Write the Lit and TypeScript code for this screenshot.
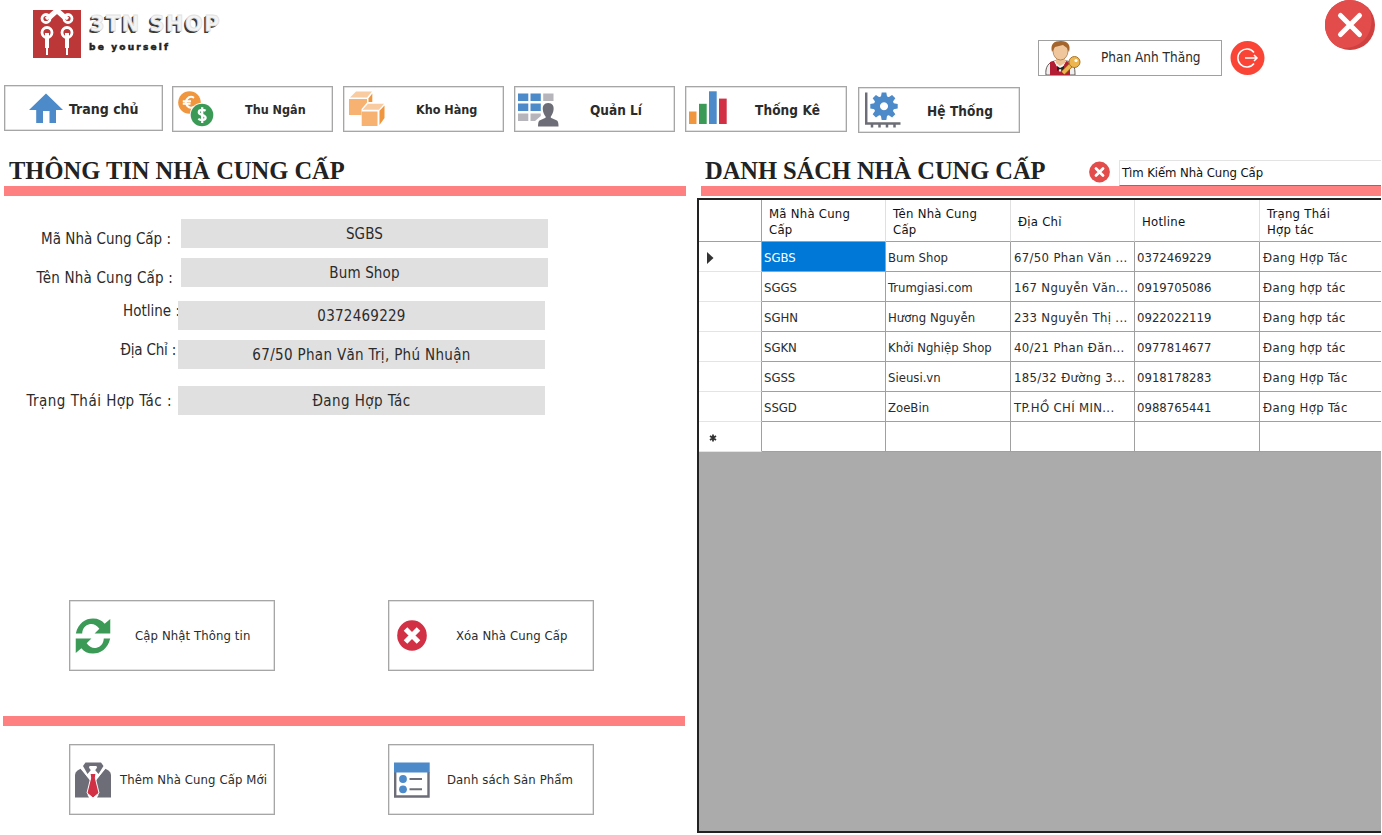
import { LitElement, html, svg, css } from "lit";
import { customElement, property } from "lit/decorators.js";
import { classMap } from "lit/directives/class-map.js";

const gearTeeth = [0, 45, 90, 135, 180, 225, 270, 315];

const icons: Record<string, any> = {
  home: html`<svg width="34" height="31" viewBox="0 0 34 31"><path fill="#4c8ac9" d="M17 0.500L34 17H27V30H20.500V18H14V30H7.200V17H0Z"/></svg>`,
  money: html`<svg width="36" height="36" viewBox="0 0 36 36">
    <circle cx="11.500" cy="11.500" r="11.300" fill="#f0963f"/>
    <path d="M16 6.800A5.300 5.300 0 1 0 16 15.800M4.800 10.200H13M4.800 12.800H12.500" fill="none" stroke="#fff" stroke-width="2"/>
    <circle cx="24" cy="24" r="12.300" fill="#fff"/><circle cx="24" cy="24" r="11.300" fill="#3a9a56"/>
    <path d="M27.600 19.800C25.500 18.300 20.800 18.300 20.800 21.200C20.800 24.500 27.600 23.200 27.600 26.700C27.600 29.500 22.800 29.500 20.300 27.900M24.200 16.200V32" fill="none" stroke="#fff" stroke-width="2.300"/></svg>`,
  boxes: html`<svg width="36" height="36" viewBox="0 0 36 36">
    <path fill="#f7b170" d="M0 8H18V11.500L12.500 18V24H0Z"/><path fill="#f9cba0" d="M1 6.500L7 0.500H23L18 6.500Z"/><path fill="#f0963f" d="M19.500 7.500L23.300 2.500V11H19.500Z"/>
    <path fill="#f7b170" d="M12.700 20.500H28.500V35H12.700Z"/><path fill="#f9cba0" d="M13.500 18.800L19 12.800H35L30 18.800Z"/><path fill="#f0963f" d="M30.500 19.800L35.500 14.500V27L30.500 34Z"/></svg>`,
  manage: html`<svg width="41" height="34" viewBox="0 0 41 34">
    <path fill="#4c8ac9" d="M0 0.500H10.300V8H0ZM12.500 0.500H22.800V8H12.500ZM0 10.400H10.300V18H0ZM12.500 10.400H22.800V18H12.500Z"/>
    <path fill="#b6b5bb" d="M25.200 0.500H35.500V8H25.200ZM0 20.500H10.300V28H0ZM12.500 20.500H22.800V23L17 28H12.500Z"/>
    <path fill="#6d6d77" d="M30.200 10C34.500 10 36 13 35.600 16.500C35.300 19.500 34 22 32.800 23.500V24.800L39 27.500Q40.500 28.300 40.500 33.500H20Q20 28.300 21.500 27.500L27.600 24.800V23.500C26.300 22 25 19.500 24.800 16.500C24.500 13 26 10 30.200 10Z"/></svg>`,
  chart: html`<svg width="38" height="33" viewBox="0 0 38 33"><path fill="#f0963f" d="M0 20.500H7.500V33H0Z"/><path fill="#3a9a56" d="M10 12.800H17.700V33H10Z"/><path fill="#4c8ac9" d="M20 0.300H27.700V33H20Z"/><path fill="#d13045" d="M30 7.600H37.700V33H30Z"/></svg>`,
  system: html`<svg width="36" height="36" viewBox="0 0 36 36">
    <path d="M1.200 0.500V31.500H35.500M7 31V35.500M14.500 31V35.500M22 31V35.500M29.500 31V35.500" fill="none" stroke="#6d6d77" stroke-width="2.500"/>
    <g fill="#4c8ac9">${gearTeeth.map((a) => svg`<path transform="rotate(${a} 19 14.200)" d="M15.700 6L16.700 0.500H21.300L22.300 6Z"/>`)}<path fill-rule="evenodd" d="M19 4A10.200 10.200 0 1 1 18.990 4ZM19 10.200A4 4 0 1 0 19.010 10.200Z"/></g></svg>`,
  refresh: html`<svg width="36" height="36" viewBox="0 0 34 36" preserveAspectRatio="none"><g fill="#3a9a56">
    <path d="M0.800 15.500C3 5 10 0.500 17 0.500C22 0.500 25.500 2.500 28 5.800L33.300 1V15.500H18.500L23 10.800C20.500 7 17 5.300 13.500 6.200C10 7 7 10.500 6.800 15.500Z"/>
    <path transform="rotate(180 17 18)" d="M0.800 15.500C3 5 10 0.500 17 0.500C22 0.500 25.500 2.500 28 5.800L33.300 1V15.500H18.500L23 10.800C20.500 7 17 5.300 13.500 6.200C10 7 7 10.500 6.800 15.500Z"/></g></svg>`,
  remove: html`<svg width="30" height="31" viewBox="0 0 30 31"><ellipse cx="15" cy="15.500" rx="14.800" ry="15.200" fill="#d13045"/><path d="M8.500 9L21.500 22M21.500 9L8.500 22" stroke="#fff" stroke-width="5"/></svg>`,
  suit: html`<svg width="36" height="36" viewBox="0 0 36 36"><path fill="#6d6d77" d="M0 35.500V13Q0 10 2.500 8.500L6 6.500L16 20L12.500 33L14 35.500ZM36 35.500V13Q36 10 33.500 8.500L30 6.500L20 20L23.500 33L22 35.500Z"/>
    <path fill="#6d6d77" d="M8 4L10.500 0.500H26L28.500 4L23.500 12L18 5.500L12.500 12Z"/><path d="M5.500 5.500L13.500 15L18 10L22.500 15L30.500 5.500M14.500 5L18 9.500L21.500 5" fill="none" stroke="#fff" stroke-width="1.700"/><path fill="#fff" d="M14 4H22L18 9Z"/>
    <path fill="#d13045" stroke="#fff" stroke-width="1" d="M15 11.500H21L20.300 16L24 31L18 36L12 31L15.700 16Z"/></svg>`,
  list: html`<svg width="36" height="36" viewBox="0 0 36 36"><path d="M1.200 10V34.500H34.500V10" fill="none" stroke="#6d6d77" stroke-width="2.400"/><path fill="#4c8ac9" d="M0 0.500H35.700V10.500H0Z"/><circle cx="9" cy="17" r="3.900" fill="#4c8ac9"/><circle cx="9" cy="27.300" r="3.900" fill="#4c8ac9"/><path d="M15.500 17H28M15.500 27.300H28" stroke="#6d6d77" stroke-width="2"/></svg>`,
};

@customElement("tool-button")
class ToolButton extends LitElement {
  @property() icon = "";
  @property() label = "";
  static styles = css`
    :host { display: flex; align-items: flex-start; box-sizing: border-box; border: 1px solid #a6a6a6; box-shadow: inset 0 0 0 0.500px #c4c4c4; background: #fff; }
    svg { display: block; flex: none; margin: var(--iy, 4px) 0 0 var(--ix, 5px); }
    span { white-space: nowrap; margin-left: var(--gap, 20px); align-self: center; padding-top: 1px; }
  `;
  render() {
    return html`${icons[this.icon]}<span>${this.label}</span>`;
  }
}

const fields = [
  ["Mã Nhà Cung Cấp :", "SGBS", "f1"],
  ["Tên Nhà Cung Cấp :", "Bum Shop", "f2"],
  ["Hotline :", "0372469229", "f3"],
  ["Địa Chỉ :", "67/50 Phan Văn Trị, Phú Nhuận", "f4"],
  ["Trạng Thái Hợp Tác :", "Đang Hợp Tác", "f5"],
];

const columns = ["", "Mã Nhà Cung Cấp", "Tên Nhà Cung Cấp", "Địa Chỉ", "Hotline", "Trạng Thái Hợp tác"];
const columnClasses = ["code", "label", "address", "num", "status"];
const suppliers = [
  ["SGBS", "Bum Shop", "67/50 Phan Văn ...", "0372469229", "Đang Hợp Tác"],
  ["SGGS", "Trumgiasi.com", "167 Nguyễn Văn...", "0919705086", "Đang hợp tác"],
  ["SGHN", "Hương Nguyễn", "233 Nguyễn Thị ...", "0922022119", "Đang hợp tác"],
  ["SGKN", "Khởi Nghiệp Shop", "40/21 Phan Đăn...", "0977814677", "Đang hợp tác"],
  ["SGSS", "Sieusi.vn", "185/32 Đường 3...", "0918178283", "Đang Hợp Tác"],
  ["SSGD", "ZoeBin", "TP.HỒ CHÍ MIN...", "0988765441", "Đang Hợp Tác"],
  ["", "", "", "", ""],
];

@customElement("app-root")
class AppRoot extends LitElement {
  static styles = css`
    :host { display: flex; flex-direction: column; width: 1382px; height: 835px; overflow: hidden; background: #fff; color: #2b2b2b;
      font: 13px/16px "DejaVu Sans Condensed", "DejaVu Sans", sans-serif; font-stretch: condensed; }
    * { box-sizing: border-box; }
    svg { display: block; }
    header { display: flex; height: 85px; flex: none; padding-left: 33px; }
    .logo { margin-top: 10px; }
    .brand { margin: 12px 0 0 9px; flex: 1; }
    .name { font: 900 21px/25px "DejaVu Sans", sans-serif; letter-spacing: 1.400px; color: #f4f4f4; white-space: nowrap; -webkit-text-stroke: 0.800px #e2e2e2;
      text-shadow: -1px 1px 0 #3a3a36, -2px 2px 0 #3a3a36; }
    .tag { font: bold 9px/11px "DejaVu Sans", sans-serif; letter-spacing: 2.200px; margin: 5px 0 0 -1px; color: #222; -webkit-text-stroke: 0.500px #222; }
    .user { display: flex; width: 184px; height: 36px; margin-top: 40px; border: 1px solid #a0a0a0; padding-left: 6px; font-size: 13.500px; line-height: 33px; }
    .user span { margin-left: 20px; white-space: nowrap; }
    .logout { margin: 41px 0 0 8px; }
    .close { margin: 0 7px 0 60px; }
    nav { display: grid; grid-template-columns: 168px 171px 171px 171px 173px 162px; height: 60px; flex: none; padding-left: 4px; font-weight: bold; font-size: 12.500px; align-items: start; }
    nav tool-button { width: 161px; height: 46px; margin-top: 1px; }
    .n1 { --ix: 24px; --iy: 7px; --gap: 6px; font-size: 14px; }
    nav .n1 { width: 159px; margin-top: 0; }
    .n2 { --gap: 31px; }
    .n3 { --gap: 31px; }
    .n4 { --ix: 3px; --iy: 6px; --gap: 31px; font-size: 13.500px; }
    .n5 { --ix: 3px; --iy: 4px; --gap: 28px; font-size: 13.500px; letter-spacing: 0.100px; }
    .n6 { --ix: 6px; --gap: 26px; font-size: 13.500px; letter-spacing: 0.100px; }
    nav .n5 { width: 162px; }
    nav .n6 { width: 162px; margin-top: 2px; }
    main { display: grid; grid-template-columns: 697px 684px; height: 690px; }
    h1 { margin: 0; font: bold 24.500px/30px "Liberation Serif", serif; white-space: nowrap; color: #222; }
    .left h1 { padding: 11px 0 0 9px; height: 41px; }
    .bar { height: 10px; background: #ff8080; }
    .left .bar { margin-left: 4px; width: 682px; }
    .left .bar.low { margin: 45px 0 0 3px; }
    .form { height: 404px; padding-top: 23px; font-size: 15px; line-height: 20px; }
    .field { display: flex; align-items: flex-start; height: 29px; }
    .field label { width: 171px; text-align: right; white-space: nowrap; margin-right: 10px; margin-top: 10px; }
    .field output { width: 367px; height: 29px; line-height: 30px; background: #e0e0e0; text-align: center; letter-spacing: 0.150px; z-index: 1; }
    .f2 { margin-top: 10px; }
    .f2 label { width: 173px; margin-right: 8px; letter-spacing: 0.200px; }
    .f3 { margin-top: 14px; }
    .f3 label { width: 180px; margin-right: -2px; margin-top: 0; }
    .f3 output { letter-spacing: 0.250px; }
    .f4 { margin-top: 10px; }
    .f4 label { width: 176px; margin-right: 2px; margin-top: 0; letter-spacing: -0.200px; }
    .f4 output { letter-spacing: 0.330px; }
    .f5 { margin-top: 17px; }
    .f5 label { width: 172px; margin-right: 6px; margin-top: 5px; letter-spacing: 0.480px; }
    .f5 output { letter-spacing: 0.450px; }
    .actions { display: grid; grid-template-columns: 206px 206px; column-gap: 113px; padding-left: 69px; }
    .actions.low { margin-top: 18px; }
    .actions tool-button { height: 71px; letter-spacing: 0.100px; }
    .b1 { --iy: 17px; --gap: 24px; }
    .b2 { --ix: 8px; --iy: 19px; --gap: 29px; }
    .b3 { --iy: 17px; --gap: 9px; }
    .b4 { --iy: 17px; --gap: 17px; }
    .top { display: flex; height: 41px; padding-left: 8px; }
    .top h1 { padding-top: 11px; width: 384px; letter-spacing: -0.050px; }
    .clear { margin-top: 16px; }
    .search { margin: 15px 0 0 9px; flex: 1; height: 26px; border: 1px solid #e3e3e3; border-right: 0; border-bottom-color: #777; padding-left: 2px; line-height: 23px; white-space: nowrap; color: #111; letter-spacing: -0.080px; }
    .right .bar { margin-left: 4px; }
    .grid { margin-top: 2px; height: 635px; border: 2px solid #222; border-right: 0; background: #ababab; overflow: hidden; }
    .row { display: grid; grid-template-columns: 63px 124px 125px 124px 125px 124px; height: 30px; background: #fff; }
    .cell { display: flex; align-items: center; padding: 2px 0 0 2px; border-right: 1px solid #a0a0a0; border-bottom: 1px solid #a0a0a0; white-space: nowrap; overflow: hidden; letter-spacing: 0; }
    .cell.code { letter-spacing: -0.050px; }
    .cell.address { letter-spacing: 0.330px; padding-left: 3px; }
    .cell.status { letter-spacing: 0.350px; padding-left: 3px; }
    .cell.mark { border-bottom-color: #e4e4e4; padding-left: 8px; }
    .row.head { height: 42px; line-height: 16px; color: #111; }
    .head .cell { padding: 2px 28px 0 7px; white-space: normal; border-right-color: #e0e0e0; letter-spacing: 0.250px; }
    .head .cell.mark { border-right-color: #a0a0a0; border-bottom-color: #a0a0a0; }
    .head .cell:last-child { padding-right: 40px; }
    .cell.sel { background: #0078d7; color: #fff; }
  `;

  render() {
    return html`
      <header>
        <svg class="logo" width="48" height="48" viewBox="0 0 48 48">
          <path fill="#bc3838" d="M0 0H48V48H0Z"/>
          <g fill="none" stroke="#fff" stroke-width="2.800">
            <circle cx="13" cy="8.500" r="4"/><circle cx="35" cy="8.500" r="4"/>
            <path stroke-width="3.400" d="M13 9L22 1M35 9L26 1M22 0L31 8M26 0L17 8"/>
            <circle cx="14" cy="22.500" r="5"/><circle cx="34" cy="22.500" r="5"/>
            <path stroke-width="4" d="M14 23V38M34 23V38"/><path stroke-width="2" d="M14 37V45M34 37V45"/>
          </g>
        </svg>
        <div class="brand"><div class="name">3TN SHOP</div><div class="tag">be yourself</div></div>
        <div class="user">
          <svg width="36" height="34" viewBox="0 0 36 34">
            <path fill="#eee" stroke="#665c58" d="M1 34C0 27 3 21 10 20L22 20C29 21 30 26 30 34Z"/>
            <path fill="#b41e35" d="M5 34V21L9 20L15 31L21 20L25 22V34Z"/><path fill="#f5f5f5" d="M9 20L15 31L21 20Z"/>
            <path fill="#222" d="M12 25L15 27L19 25V30L15 28L12 30Z"/>
            <path fill="#ecc095" d="M11 16H20V22L15 25L11 22Z"/>
            <ellipse cx="15.500" cy="10" rx="7.500" ry="9" fill="#f0c79c" stroke="#9a6940" stroke-width=".7"/>
            <path fill="#a4652c" d="M7 11C5 3 9 0 16 0C23 0 26 4 24 11L22 7L18 4L10 6Z"/>
            <path d="M27 23L18 32" stroke="#9d6a1c" stroke-width="5"/><path d="M27 23L18 32" stroke="#edb64f" stroke-width="3.500"/>
            <circle cx="29.500" cy="21" r="5.500" fill="#edb64f" stroke="#a8762a"/><circle cx="31" cy="19.500" r="1.600" fill="#fff"/>
          </svg>
          <span>Phan Anh Thăng</span>
        </div>
        <svg class="logout" width="35" height="34" viewBox="0 0 35 34"><circle cx="17.500" cy="17" r="17" fill="#f94436"/>
          <path d="M24 11.500A9 9 0 1 0 24 22.500M15 17H27M24 14L27 17L24 20" fill="none" stroke="#fff" stroke-width="1.500"/></svg>
        <svg class="close" width="50" height="50" viewBox="0 0 50 50"><circle cx="25" cy="25" r="25" fill="#cf4040"/>
          <path fill="#e24c4b" d="M25 0A25 25 0 0 1 45 11C49 23 45 38 34 44C28 48 18 49 13 47A25 25 0 0 1 25 0Z"/>
          <path d="M15.500 15.500L34.500 34.500M34.500 15.500L15.500 34.500" stroke="#fff" stroke-width="5" stroke-linecap="round"/></svg>
      </header>
      <nav>
        <tool-button class="n1" icon="home" label="Trang chủ"></tool-button>
        <tool-button class="n2" icon="money" label="Thu Ngân"></tool-button>
        <tool-button class="n3" icon="boxes" label="Kho Hàng"></tool-button>
        <tool-button class="n4" icon="manage" label="Quản Lí"></tool-button>
        <tool-button class="n5" icon="chart" label="Thống Kê"></tool-button>
        <tool-button class="n6" icon="system" label="Hệ Thống"></tool-button>
      </nav>
      <main>
        <section class="left">
          <h1>THÔNG TIN NHÀ CUNG CẤP</h1>
          <div class="bar"></div>
          <div class="form">
            ${fields.map(([l, v, c]) => html`<div class="field ${c}"><label>${l}</label><output>${v}</output></div>`)}
          </div>
          <div class="actions">
            <tool-button class="b1" icon="refresh" label="Cập Nhật Thông tin"></tool-button>
            <tool-button class="b2" icon="remove" label="Xóa Nhà Cung Cấp"></tool-button>
          </div>
          <div class="bar low"></div>
          <div class="actions low">
            <tool-button class="b3" icon="suit" label="Thêm Nhà Cung Cấp Mới"></tool-button>
            <tool-button class="b4" icon="list" label="Danh sách Sản Phẩm"></tool-button>
          </div>
        </section>
        <section class="right">
          <div class="top">
            <h1>DANH SÁCH NHÀ CUNG CẤP</h1>
            <svg class="clear" width="21" height="22" viewBox="0 0 21 22"><circle cx="10.500" cy="11" r="10.400" fill="#e24c4b"/><path d="M7 7.500L14 14.500M14 7.500L7 14.500" stroke="#fff" stroke-width="2.800" stroke-linecap="round"/></svg>
            <div class="search">Tìm Kiếm Nhà Cung Cấp</div>
          </div>
          <div class="bar"></div>
          <div class="grid">
            <div class="row head">${columns.map((c, i) => html`<div class=${classMap({ cell: true, mark: i === 0 })}>${c}</div>`)}</div>
            ${suppliers.map((r, i) => html`<div class="row">
              <div class="cell mark">${i === 0
                ? html`<svg width="7" height="12" viewBox="0 0 7 12"><path fill="#333" d="M0 0L6.500 6L0 12Z"/></svg>`
                : i === suppliers.length - 1
                  ? html`<svg width="12" height="8" viewBox="0 0 12 8"><path d="M6 0.500V7.500M3 2L9 6M9 2L3 6" stroke="#333" stroke-width="1.800"/></svg>`
                  : ""}</div>
              ${r.map((v, j) => html`<div class=${classMap({ cell: true, [columnClasses[j]]: true, sel: i === 0 && j === 0 })}>${v}</div>`)}
            </div>`)}
          </div>
        </section>
      </main>
    `;
  }
}
